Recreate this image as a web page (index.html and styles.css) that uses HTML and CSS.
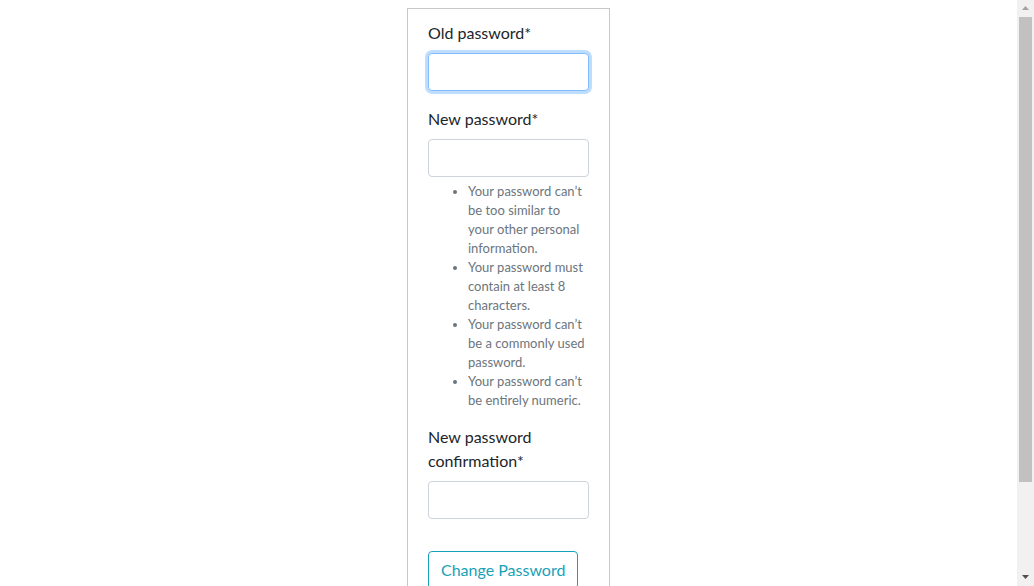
FILE: index.html
```html
<!DOCTYPE html>
<html lang="en">
<head>
<meta charset="utf-8">
<title>Change password</title>
<link rel="stylesheet" href="styles.css">
</head>
<body>
<div class="page">
  <form class="card">
    <div class="group">
      <label class="label" for="old">Old password*</label>
      <input class="input focused" id="old" type="password">
    </div>
    <div class="group">
      <label class="label" for="new1">New password*</label>
      <input class="input" id="new1" type="password">
      <ul class="help">
        <li>Your password can’t be too similar to your other personal information.</li>
        <li>Your password must contain at least 8 characters.</li>
        <li>Your password can’t be a commonly used password.</li>
        <li>Your password can’t be entirely numeric.</li>
      </ul>
    </div>
    <div class="group">
      <label class="label" for="new2">New password confirmation*</label>
      <input class="input" id="new2" type="password">
    </div>
    <button class="btn" type="button">Change Password</button>
  </form>
</div>
<div class="scrollbar" aria-hidden="true">
  <svg class="arrow up" width="17" height="17" viewBox="0 0 17 17"><path d="M5 10 L8.5 6 L12 10 Z" fill="#a3a3a3"/></svg>
  <div class="track"><div class="thumb"></div></div>
  <svg class="arrow down" width="17" height="17" viewBox="0 0 17 17"><path d="M5 6 L12 6 L8.5 10 Z" fill="#505050"/></svg>
</div>
</body>
</html>
```
FILE: styles.css
```css
html, body {
  margin: 0;
  padding: 0;
  background: #fff;
}
body {
  font-family: Lato, "Open Sans", sans-serif;
  font-size: 16px;
  line-height: 1.5;
  color: #212529;
}
.page {
  width: 1017px;
  box-sizing: border-box;
  padding: 8px;
  display: flex;
  justify-content: center;
}
.card {
  width: 161px;
  border: 1px solid #c8c8c8;
  padding: 12px 20px 40px;
  display: flex;
  flex-direction: column;
}
.group {
  display: flex;
  flex-direction: column;
  margin-bottom: 16px;
}
.label {
  margin-bottom: 8px;
  font-size: 16px;
  line-height: 24px;
}
.input {
  box-sizing: border-box;
  width: 161px;
  height: 38px;
  margin: 0;
  border: 1px solid #ced4da;
  border-radius: 4px;
  background: #fff;
  outline: none;
  font: inherit;
  padding: 6px 12px;
}
.input.focused {
  border-color: #80bdff;
  box-shadow: 0 0 0 3px rgba(0, 123, 255, 0.25);
}
.help {
  margin: 5px 0 -1px;
  padding: 0 2px 0 40px;
  font-size: 13px;
  line-height: 19px;
  color: #6c757d;
}
.btn {
  align-self: flex-start;
  margin-top: 16px;
  font: inherit;
  font-size: 16px;
  line-height: 24px;
  padding: 6px 12px;
  color: #17a2b8;
  background: #fff;
  border: 1px solid #17a2b8;
  border-radius: 4px;
}
.scrollbar {
  position: fixed;
  top: 0;
  right: 0;
  width: 17px;
  height: 100vh;
  background: #f1f1f1;
  display: flex;
  flex-direction: column;
}
.arrow {
  display: block;
  flex: none;
}
.track {
  flex: 1;
  display: flex;
  flex-direction: column;
}
.thumb {
  margin: 0 2px;
  height: 465px;
  background: #c1c1c1;
}
```
